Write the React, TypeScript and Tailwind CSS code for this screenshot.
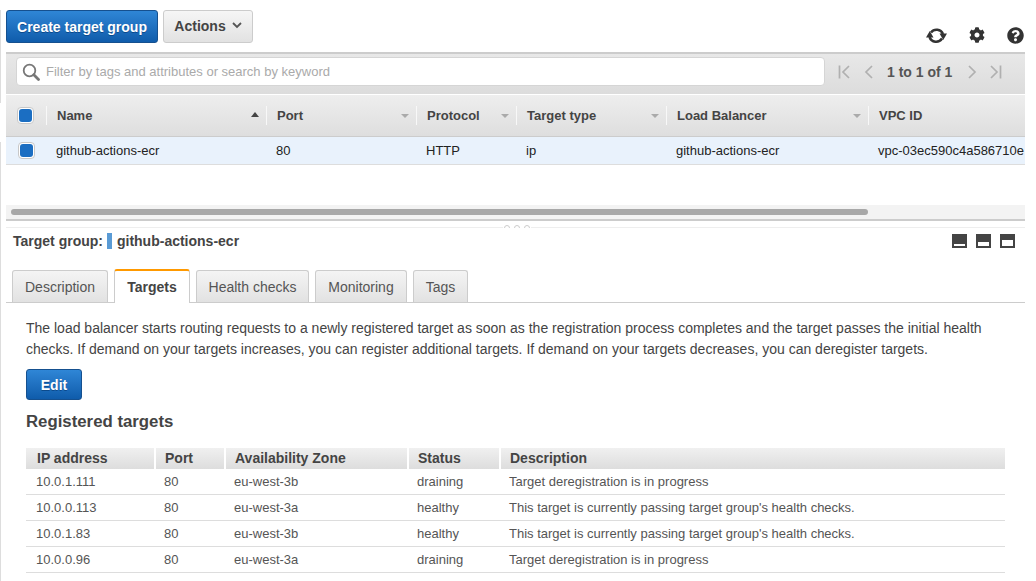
import { FaCog, FaQuestionCircle } from 'react-icons/fa'

const blueBtn = 'rounded-[3px] border border-[#15508f] bg-gradient-to-b from-[#2f86d6] to-[#0f5cab] font-bold text-white text-[14px] [text-shadow:0_1px_0_#0b4a8c]'

const columns = [
  { label: 'Name', value: 'github-actions-ecr', width: 'w-[220px]', sort: 'up' },
  { label: 'Port', value: '80', width: 'w-[150px]', sort: 'down' },
  { label: 'Protocol', value: 'HTTP', width: 'w-[100px]', sort: 'down' },
  { label: 'Target type', value: 'ip', width: 'w-[150px]', sort: 'down' },
  { label: 'Load Balancer', value: 'github-actions-ecr', width: 'w-[202px]', sort: 'down' },
  { label: 'VPC ID', value: 'vpc-03ec590c4a586710e', width: 'w-[157px]', sort: '' },
]

const tabs = [
  { label: 'Description', width: 'w-[96px]' },
  { label: 'Targets', width: 'w-[76px]', active: true },
  { label: 'Health checks', width: 'w-[113px]' },
  { label: 'Monitoring', width: 'w-[92px]' },
  { label: 'Tags', width: 'w-[55px]' },
]

const targets = [
  ['10.0.1.111', '80', 'eu-west-3b', 'draining', 'Target deregistration is in progress'],
  ['10.0.0.113', '80', 'eu-west-3a', 'healthy', "This target is currently passing target group's health checks."],
  ['10.0.1.83', '80', 'eu-west-3b', 'healthy', "This target is currently passing target group's health checks."],
  ['10.0.0.96', '80', 'eu-west-3a', 'draining', 'Target deregistration is in progress'],
]

const targetCols = [
  { label: 'IP address', width: 'w-[128px]' },
  { label: 'Port', width: 'w-[70px]' },
  { label: 'Availability Zone', width: 'w-[183px]' },
  { label: 'Status', width: 'w-[92px]' },
  { label: 'Description', width: 'flex-1' },
]

function Checkbox() {
  return (
    <span className="flex h-[17px] w-[17px] items-center justify-center rounded-[4px] border border-[#c8c8c8] bg-white">
      <span className="h-[13px] w-[13px] rounded-[3px] bg-[#1b6ec2]" />
    </span>
  )
}

function PagerIcon({ d, bar }: { d: string; bar?: number }) {
  return (
    <svg width="14" height="16" viewBox="0 0 14 16" fill="none" stroke="#b0b0b0" strokeWidth="1.7">
      <path d={d} />
      {bar !== undefined && <path d={`M${bar} 1.5V14.5`} />}
    </svg>
  )
}

function PanelIcon({ fill }: { fill: string }) {
  return (
    <span className="relative block h-[14px] w-[15px] bg-[#444444]">
      <span className={`absolute bottom-[2px] left-[2px] right-[2px] bg-white ${fill}`} />
    </span>
  )
}

export default function App() {
  return (
    <div className="flex h-[581px] w-[1036px] overflow-hidden bg-white font-['Liberation_Sans',Arial,sans-serif] text-[13px] text-[#444444]">
      {/* Left rail */}
      <div className="flex w-[1px] flex-col">
        <div className="h-[10px]" />
        <div className="h-[93px] bg-[#dddddd]" />
        <div className="h-[39px]" />
        <div className="flex-1 bg-[#dddddd]" />
      </div>

      <div className="h-full w-[1024px] pl-[5px]">
        {/* Toolbar */}
        <div className="flex h-[52px] pt-[10px]">
          <button className={`${blueBtn} h-[33px] w-[152px] pt-[1px]`}>Create target group</button>
          <button className="ml-[5px] flex h-[33px] w-[90px] items-center justify-center gap-[6px] rounded-[3px] border border-[#cccccc] bg-gradient-to-b from-[#f6f6f6] to-[#e2e2e2] text-[14px] font-bold text-[#444444]">
            Actions
            <svg width="10" height="7" viewBox="0 0 10 7" fill="none" stroke="#555555" strokeWidth="1.8" className="mb-[3px]">
              <path d="M1 1l4 4 4-4" />
            </svg>
          </button>
          <div className="ml-auto flex items-center gap-[22px] pt-[8px] pr-[1px]">
            <svg width="21" height="15" viewBox="0 0 21 15" fill="none" stroke="#333333" strokeWidth="2.5">
              <path d="M5 4.5A7 7 0 0 1 17 6" />
              <path d="M3.5 9A7 7 0 0 0 16 10.5" />
              <path d="M13.5 5.5h7.5l-3.75 6.5z" fill="#333333" stroke="none" />
              <path d="M0 9.5h7.5L3.75 3z" fill="#333333" stroke="none" />
            </svg>
            <FaCog className="text-[16px] text-[#333333]" />
            <FaQuestionCircle className="text-[17px] text-[#333333]" />
          </div>
        </div>

        {/* Filter bar */}
        <div className="flex h-[42px] items-start border-t-2 border-[#cccccc] bg-gradient-to-b from-[#e8e8e8] to-[#dcdcdc] pl-[10px] pt-[3px]">
          <div className="flex h-[29px] w-[809px] items-center rounded-[4px] border border-[#d5d5d5] bg-white pl-[5px] pt-[1px]">
            <svg width="18" height="18" viewBox="0 0 18 18" fill="none" stroke="#777777">
              <circle cx="7.5" cy="7.5" r="5.8" strokeWidth="1.8" />
              <path d="M11.8 11.8L16.5 16.5" strokeWidth="2.8" strokeLinecap="round" />
            </svg>
            <span className="ml-[6px] text-[13px] text-[#aaaaaa]">Filter by tags and attributes or search by keyword</span>
          </div>
          <div className="ml-[13px] flex h-[29px] items-center pt-[1px]">
            <PagerIcon d="M11 2L5 8l6 6" bar={1.5} />
            <span className="w-[10px]" />
            <PagerIcon d="M10 2L4 8l6 6" />
            <span className="ml-[11px] text-[14px] font-bold text-[#555555]">1 to 1 of 1</span>
            <span className="w-[13px]" />
            <PagerIcon d="M4 2l6 6-6 6" />
            <span className="w-[9px]" />
            <PagerIcon d="M3 2l6 6-6 6" bar={12.5} />
          </div>
        </div>

        {/* Table */}
        <div className="flex h-[43px] items-center border-y border-t-white border-b-[#cccccc] bg-gradient-to-b from-[#eeeeee] to-[#dedede]">
          <div className="flex w-[40px] items-center pl-[11px]"><Checkbox /></div>
          {columns.map((c) => (
            <div key={c.label} className={`relative flex h-[19px] items-center border-l border-[#f8f8f8] pl-[10px] text-[13px] font-bold ${c.width}`}>
              {c.label}
              {c.sort === 'up' && <span className="absolute right-[7px] top-[6px] h-0 w-0 border-x-[4px] border-b-[5px] border-x-transparent border-b-[#444444]" />}
              {c.sort === 'down' && <span className="absolute right-[7px] top-[8px] h-0 w-0 border-x-[4px] border-t-[4px] border-x-transparent border-t-[#aaaaaa]" />}
            </div>
          ))}
        </div>
        <div className="flex h-[28px] items-center border-b border-[#dddddd] bg-[#e9f2fc] text-[13px] text-[#222222]">
          <div className="flex w-[40px] items-center pl-[12px]"><Checkbox /></div>
          {columns.map((c) => (
            <div key={c.label} className={`whitespace-nowrap pl-[10px] ${c.width}`}>{c.value}</div>
          ))}
        </div>

        {/* Scrollbar */}
        <div className="mt-[40px] h-[16px] border-b-2 border-[#cccccc] bg-[#f3f3f3] pl-[5px] pt-[4px]">
          <div className="h-[6px] w-[857px] rounded-full bg-[#a8a8a8]" />
        </div>

        {/* Resize handle */}
        <div className="relative mt-[6px] h-[1px] bg-[#eeeeee]">
          <span className="absolute left-[497px] top-[-2px] flex h-[3px] gap-[4px] overflow-hidden bg-white px-[1px]">
            <span className="h-[6px] w-[6px] rounded-full border border-[#cccccc]" />
            <span className="h-[6px] w-[6px] rounded-full border border-[#cccccc]" />
            <span className="h-[6px] w-[6px] rounded-full border border-[#cccccc]" />
          </span>
        </div>

        {/* Detail header */}
        <div className="flex h-[26px] items-center pl-[7px] text-[14px] font-bold">
          <span>Target group:</span>
          <span className="ml-[4px] h-[16px] w-[5px] bg-[#5a9bd5]" />
          <span className="ml-[5px]">github-actions-ecr</span>
          <div className="ml-auto flex gap-[9px] pr-[10px]">
            <PanelIcon fill="h-[2px]" />
            <PanelIcon fill="h-[4px]" />
            <PanelIcon fill="h-[6px]" />
          </div>
        </div>

        {/* Tabs */}
        <div className="mt-[14px] flex h-[35px] items-end gap-[6px] border-b border-[#cccccc] pl-[6px]">
          {tabs.map((t) =>
            t.active ? (
              <div key={t.label} className={`relative -mb-[1px] flex h-[34px] items-center justify-center rounded-t-[3px] border-x border-t-2 border-x-[#cccccc] border-t-[#ff9900] bg-white pt-[1px] text-[14px] font-bold ${t.width}`}>
                {t.label}
              </div>
            ) : (
              <div key={t.label} className={`flex h-[32px] items-center justify-center rounded-t-[3px] border-x border-t border-[#cccccc] bg-gradient-to-b from-[#f4f4f4] to-[#e2e2e2] pt-[1px] text-[14px] text-[#555555] ${t.width}`}>
                {t.label}
              </div>
            ),
          )}
        </div>

        {/* Targets tab */}
        <div className="pl-[20px]">
          <p className="mt-[15px] w-[980px] text-[14px] leading-[21px] text-[#444444]">
            The load balancer starts routing requests to a newly registered target as soon as the registration process completes and the target passes the initial health checks. If demand on your targets increases, you can register additional targets. If demand on your targets decreases, you can deregister targets.
          </p>
          <button className={`${blueBtn} mt-[9px] block h-[31px] w-[56px] pt-[1px]`}>Edit</button>
          <h3 className="mt-[12px] text-[16.8px] leading-[20px] font-bold text-[#444444]">Registered targets</h3>
          <div className="mt-[16px] w-[979px]">
            <div className="flex h-[21px] items-center bg-gradient-to-b from-[#f0f0f0] to-[#dddddd] text-[14px] font-bold">
              {targetCols.map((c, i) => (
                <div key={c.label} className={`flex h-full items-center ${i === 0 ? 'pl-[11px]' : 'border-l-2 border-white pl-[9px]'} ${c.width}`}>
                  {c.label}
                </div>
              ))}
            </div>
            {targets.map((row) => (
              <div key={row[0]} className="flex h-[26px] items-center border-b border-[#dddddd] text-[13px] text-[#555555]">
                {row.map((v, i) => (
                  <div key={i} className={`whitespace-nowrap pl-[10px] ${targetCols[i].width}`}>{v}</div>
                ))}
              </div>
            ))}
          </div>
        </div>
      </div>
    </div>
  )
}
